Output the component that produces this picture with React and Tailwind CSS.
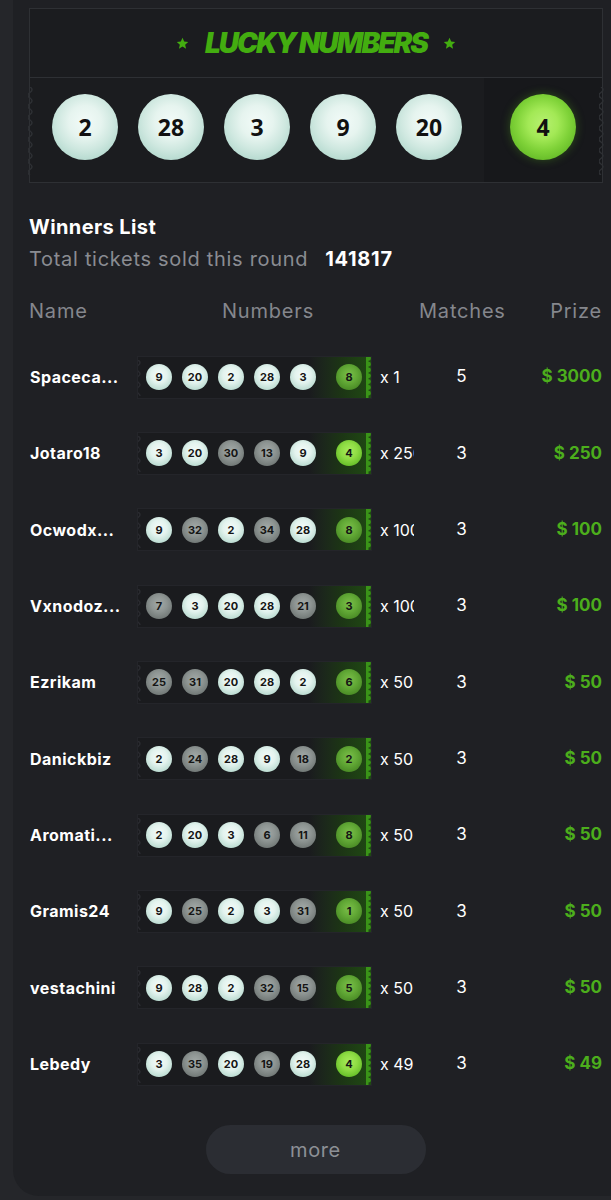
import React from 'react';

const WINNING = [2, 28, 3, 9, 20];
const BONUS = 4;

const winners = [
  { name: 'Spaceca...', nums: [9, 20, 2, 28, 3], bonus: 8, mult: 'x 1', matches: 5, prize: '3000' },
  { name: 'Jotaro18', nums: [3, 20, 30, 13, 9], bonus: 4, mult: 'x 250', matches: 3, prize: '250' },
  { name: 'Ocwodx...', nums: [9, 32, 2, 34, 28], bonus: 8, mult: 'x 100', matches: 3, prize: '100' },
  { name: 'Vxnodoz...', nums: [7, 3, 20, 28, 21], bonus: 3, mult: 'x 100', matches: 3, prize: '100' },
  { name: 'Ezrikam', nums: [25, 31, 20, 28, 2], bonus: 6, mult: 'x 50', matches: 3, prize: '50' },
  { name: 'Danickbiz', nums: [2, 24, 28, 9, 18], bonus: 2, mult: 'x 50', matches: 3, prize: '50' },
  { name: 'Aromati...', nums: [2, 20, 3, 6, 11], bonus: 8, mult: 'x 50', matches: 3, prize: '50' },
  { name: 'Gramis24', nums: [9, 25, 2, 3, 31], bonus: 1, mult: 'x 50', matches: 3, prize: '50' },
  { name: 'vestachini', nums: [9, 28, 2, 32, 15], bonus: 5, mult: 'x 50', matches: 3, prize: '50' },
  { name: 'Lebedy', nums: [3, 35, 20, 19, 28], bonus: 4, mult: 'x 49', matches: 3, prize: '49' },
];

// scalloped ticket edge (outline)
function Wave({ height, color, width = 6, className = '' }) {
  const step = 5.5;
  let d = 'M2 0';
  for (let y = 0; y < height; y += step * 2) {
    d += ` q 4 ${step / 2} 0 ${step} q -4 ${step / 2} 0 ${step}`;
  }
  return (
    <svg width={width} height={height} viewBox={`0 0 ${width} ${height}`} className={className}>
      <path d={d} fill="none" stroke={color} strokeWidth="1.5" />
    </svg>
  );
}

// perforated green edge on the right of a ticket
function StampEdge({ height, className = '' }) {
  const r = 2.4;
  let d = 'M0 0 L2.5 0';
  let y = 0;
  while (y + r * 2 <= height) {
    d += ` a${r} ${r} 0 0 1 0 ${r * 2} l0 1`;
    y += r * 2 + 1;
  }
  d += ` L2.5 ${height} L0 ${height} Z`;
  return (
    <svg width="6" height={height} viewBox={`0 0 6 ${height}`} className={className}>
      <path d={d} fill="#3a9418" />
    </svg>
  );
}

function Star() {
  return (
    <svg width="13" height="13" viewBox="0 0 24 24">
      <path d="M12 1.5l3.1 6.9 7.4.7-5.6 5 1.7 7.4L12 17.6l-6.6 3.9 1.7-7.4-5.6-5 7.4-.7z" fill="#43ad10" />
    </svg>
  );
}

function BigBall({ n, green }) {
  return (
    <div
      className={
        'w-[66px] h-[66px] rounded-full flex items-center justify-center shrink-0 ' +
        (green
          ? 'bg-[radial-gradient(circle_at_50%_45%,#b6f070_0%,#a3e956_30%,#7fd238_55%,#5cb322_85%,#3f8d14_100%)] shadow-[0_0_10px_rgba(90,180,30,0.35)]'
          : 'bg-[radial-gradient(circle_at_50%_42%,#f2fbf8_0%,#e6f4ef_32%,#cfe8e0_55%,#b2d8cd_80%,#94c2b5_100%)]')
      }
    >
      <span className="font-['Noto_Sans',sans-serif] font-bold text-[23px] text-[#111]">{n}</span>
    </div>
  );
}

function SmallBall({ n, kind }) {
  const bg =
    kind === 'white'
      ? 'bg-[radial-gradient(circle_at_50%_42%,#f4fbf9_0%,#e3f3ee_40%,#bcdcd2_75%,#9cc6ba_100%)]'
      : kind === 'gray'
      ? 'bg-[radial-gradient(circle_at_50%_42%,#a3aaa8_0%,#8e9593_40%,#727977_75%,#5a605e_100%)]'
      : kind === 'lime'
      ? 'bg-[radial-gradient(circle_at_50%_42%,#a8ec5c_0%,#8fdc44_40%,#68c02a_75%,#4a9b18_100%)]'
      : 'bg-[radial-gradient(circle_at_50%_42%,#7cbf4a_0%,#62a936_40%,#4b8d26_75%,#3a7219_100%)]';
  return (
    <div className={'w-[26px] h-[26px] rounded-full flex items-center justify-center shrink-0 ' + bg}>
      <span className="text-[11px] font-bold text-[#151515]">{n}</span>
    </div>
  );
}

function Ticket({ nums, bonus }) {
  return (
    <div className="relative w-[235px] h-[43px] bg-[#1a1b1e] border border-[#24252a] flex items-center pl-[8px] overflow-hidden">
      <Wave height={36} color="#2a2b30" className="absolute left-[-2px] top-[3px]" />
      <div className="absolute right-0 top-0 bottom-0 w-[62px] bg-gradient-to-r from-[#1a1b1e] via-[#1c3415] to-[#1f4a12]" />
      <StampEdge height={43} className="absolute right-[-1px] top-[-1px]" />
      <div className="relative flex items-center gap-[10px]">
        {nums.map((n, i) => (
          <SmallBall key={i} n={n} kind={WINNING.includes(n) ? 'white' : 'gray'} />
        ))}
      </div>
      <div className="relative ml-[20px]">
        <SmallBall n={bonus} kind={bonus === BONUS ? 'lime' : 'dark'} />
      </div>
    </div>
  );
}

export default function App() {
  return (
    <div className="w-[611px] min-h-[1200px] bg-[#25262a] font-['Inter',sans-serif] overflow-hidden">
      <div className="ml-[13px] h-[1196px] rounded-bl-[26px] bg-[#1f2024] pt-[8px]">
        {/* Lucky numbers */}
        <div className="ml-[16px] mr-[8px] border border-[#2e3034] bg-[#1b1c1f]">
          <div className="h-[69px] flex items-center justify-center gap-[16px] border-b border-[#2e3034]">
            <Star />
            <span className="italic font-black text-[28px] tracking-[-0.07em] text-[#43ad10]">LUCKY NUMBERS</span>
            <Star />
          </div>
          <div className="flex h-[104px]">
            <div className="relative flex-1 flex gap-[20px] px-[22px] pt-[16px]">
              <Wave height={88} color="#2e3034" className="absolute left-[-2px] top-[9px]" />
              {WINNING.map((n, i) => (
                <BigBall key={i} n={n} />
              ))}
            </div>
            <div className="relative w-[118px] bg-[#17181b] flex justify-center pt-[16px]">
              <BigBall n={BONUS} green />
              <Wave height={88} color="#2e3034" className="absolute right-[-3px] top-[9px]" />
            </div>
          </div>
        </div>

        {/* Winners */}
        <div className="pl-[16px] pr-[9px]">
          <div className="mt-[31px] text-[20px] leading-[26px] font-bold tracking-[0.02em] text-white">Winners List</div>
          <div className="mt-[6px] flex items-center text-[20px] leading-[26px] tracking-[0.035em]">
            <span className="text-[#8a8c92]">Total tickets sold this round</span>
            <span className="ml-[17px] font-bold text-white">141817</span>
          </div>

          <div className="mt-[19px] h-[40px] flex items-center text-[20px] tracking-[0.04em] text-[#85878d]">
            <span className="w-[193px]">Name</span>
            <span className="w-[197px]">Numbers</span>
            <span>Matches</span>
            <span className="ml-auto">Prize</span>
          </div>

          <div className="mt-[8px]">
            {winners.map((w, i) => (
              <div key={i} className="h-[76.33px] flex items-center">
                <div className="w-[108px] pl-[1px] text-[16px] font-bold tracking-[0.03em] text-white whitespace-nowrap overflow-hidden">
                  {w.name}
                </div>
                <Ticket nums={w.nums} bonus={w.bonus} />
                <div className="ml-[8px] w-[34px] overflow-hidden whitespace-nowrap text-[16px] text-white">{w.mult}</div>
                <div className="w-[95px] text-center text-[17px] text-white">{w.matches}</div>
                <div className="flex-1 text-right text-[17px] font-bold text-[#4cae1c]">$ {w.prize}</div>
              </div>
            ))}
          </div>

          <button className="mt-[23px] mx-auto flex items-center justify-center w-[220px] h-[49px] rounded-full bg-[#2b2d33] text-[20px] tracking-[0.03em] text-[#8d9096]">
            more
          </button>
        </div>
      </div>
    </div>
  );
}
